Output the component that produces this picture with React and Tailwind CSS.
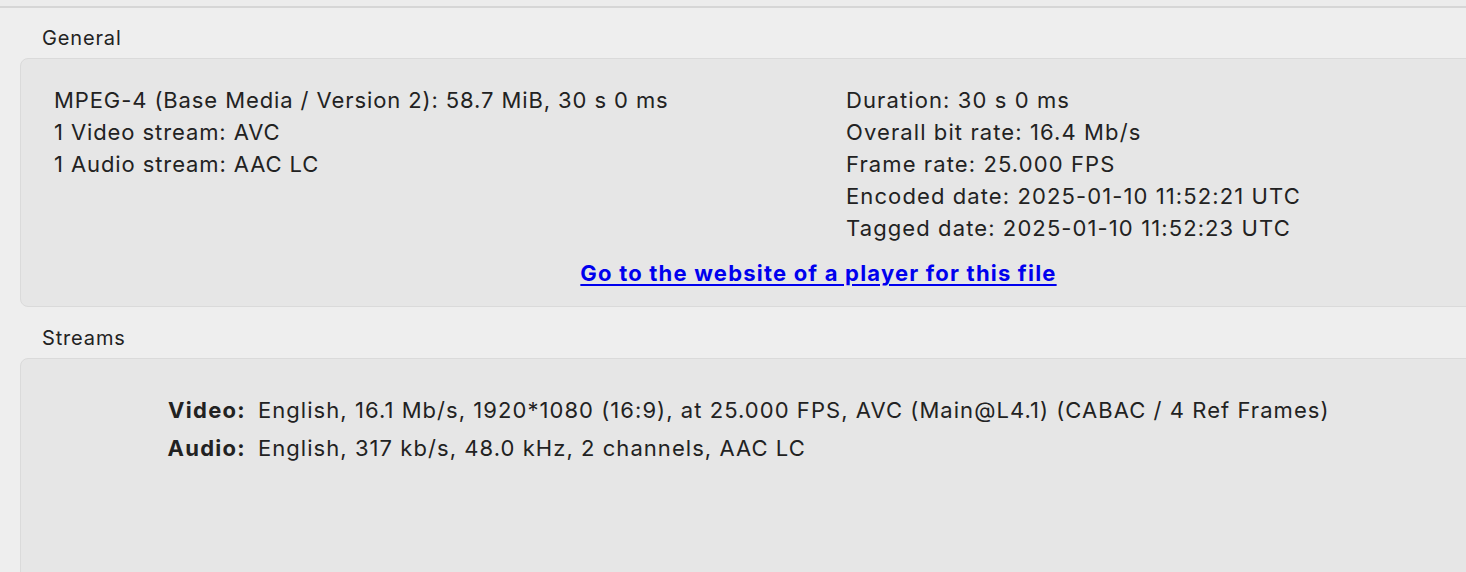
export default function App() {
  const font = { fontFamily: 'Inter, "Noto Sans", "Liberation Sans", sans-serif' };
  return (
    <div className="w-[1466px] h-[572px] overflow-hidden bg-[#eeeeee] text-[#222222]" style={font}>
      <div className="h-[8px] bg-[#ececec] border-b-[2px] border-[#d6d6d6]" />
      <div className="pl-[42px] pt-[17px] h-[50px] text-[20px] leading-[26px] tracking-[0.85px]">General</div>
      <div className="ml-[20px] w-[1597px] h-[249px] rounded-[8px] bg-[#e6e6e6] border border-[#dadada] pt-[25px] text-[22px] leading-[32px] tracking-[0.9px]">
        <div className="grid grid-cols-[792px_1fr] pl-[33px]">
          <div>
            <div>MPEG-4 (Base Media / Version 2): 58.7 MiB, 30 s 0 ms</div>
            <div>1 Video stream: AVC</div>
            <div>1 Audio stream: AAC LC</div>
          </div>
          <div className="tracking-[1.1px]">
            <div>Duration: 30 s 0 ms</div>
            <div>Overall bit rate: 16.4 Mb/s</div>
            <div>Frame rate: 25.000 FPS</div>
            <div>Encoded date: 2025-01-10 11:52:21 UTC</div>
            <div>Tagged date: 2025-01-10 11:52:23 UTC</div>
          </div>
        </div>
        <div className="mt-[13px] text-center">
          <a href="#" className="font-bold text-[#0000ee] tracking-[1.2px] underline decoration-[2px] underline-offset-[3px]">Go to the website of a player for this file</a>
        </div>
      </div>
      <div className="pl-[42px] pt-[18px] h-[51px] text-[20px] leading-[26px] tracking-[0.85px]">Streams</div>
      <div className="ml-[20px] w-[1597px] h-[260px] rounded-[8px] bg-[#e6e6e6] border border-[#dadada] pt-[32px] text-[22px] leading-[38px] tracking-[1.05px]">
        <div className="grid grid-cols-[225px_auto] gap-x-[12px] justify-start">
          <div className="text-right font-bold tracking-[1.3px]">Video:</div>
          <div>English, 16.1 Mb/s, 1920*1080 (16:9), at 25.000 FPS, AVC (Main@L4.1) (CABAC / 4 Ref Frames)</div>
          <div className="text-right font-bold tracking-[1.3px]">Audio:</div>
          <div>English, 317 kb/s, 48.0 kHz, 2 channels, AAC LC</div>
        </div>
      </div>
    </div>
  );
}
